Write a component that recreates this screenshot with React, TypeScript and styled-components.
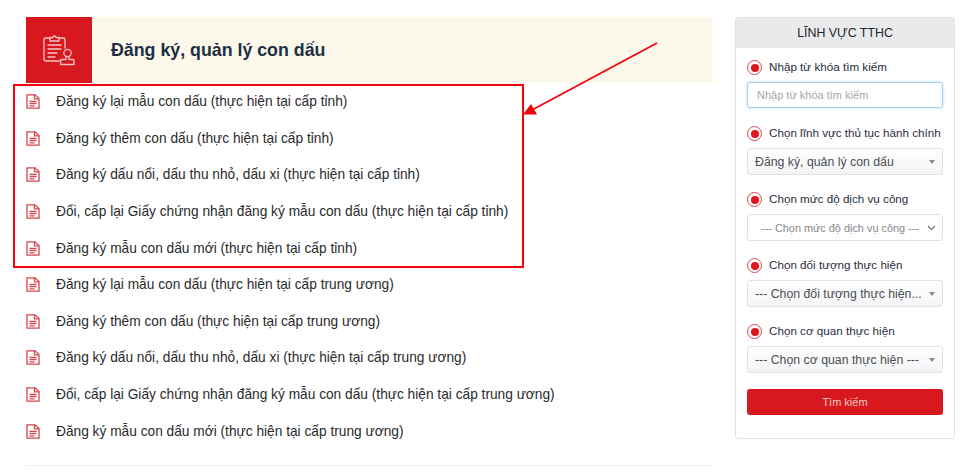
import React from "react";
import styled, { createGlobalStyle } from "styled-components";

const GlobalStyle = createGlobalStyle`
  html, body {
    margin: 0;
    padding: 0;
    background: #fff;
    font-family: "Liberation Sans", Arial, sans-serif;
  }
`;

const Page = styled.div`
  position: relative;
  width: 975px;
  height: 476px;
  overflow: hidden;
  box-sizing: border-box;
  padding: 17px 20px 0 26px;
  display: flex;
  align-items: flex-start;
  gap: 23px;
`;

const Main = styled.main`
  width: 686px;
  flex: none;
`;

const Banner = styled.div`
  display: flex;
  align-items: center;
  height: 66px;
  background: #fcf8ea;
`;

const BannerIcon = styled.div`
  width: 66px;
  height: 66px;
  flex: none;
  background: #d7181f;
  display: flex;
  align-items: center;
  justify-content: center;
`;

const BannerTitle = styled.h1`
  margin: 0 0 0 19px;
  font-size: 17.8px;
  font-weight: 700;
  color: #1d2f45;
`;

const ProcedureList = styled.ul`
  list-style: none;
  margin: 0;
  padding: 0.5px 0 15.5px;
  border-bottom: 1px solid #eceded;
`;

const ProcedureRow = styled.li`
  display: flex;
  align-items: center;
  height: 36.6px;
  font-size: 13.72px;
  color: #2a2a2c;
  white-space: nowrap;
`;

const DocIcon = styled.svg`
  width: 14px;
  height: 15px;
  margin-right: 16px;
  flex: none;
`;

const Sidebar = styled.aside`
  width: 220px;
  height: 422px;
  flex: none;
  box-sizing: border-box;
  border: 1px solid #e3e4e6;
  border-radius: 3px;
  overflow: hidden;
`;

const SidebarTitle = styled.div`
  height: 30px;
  background: #e9eaec;
  display: flex;
  align-items: center;
  justify-content: center;
  font-size: 12.4px;
  color: #24262b;
`;

const SidebarBody = styled.div`
  padding: 11px 11px 0;
  display: flex;
  flex-direction: column;
`;

const Field = styled.div`
  height: 66px;
`;

const FieldLabel = styled.div`
  display: flex;
  align-items: center;
  height: 17px;
  margin-bottom: 6px;
  font-size: 11.66px;
  color: #1f2d3d;
  white-space: nowrap;
`;

const LabelText = styled.span`
  margin-bottom: 2px;
`;

const RadioMark = styled.span`
  width: 15px;
  height: 15px;
  box-sizing: border-box;
  border: 1px solid #d7484e;
  border-radius: 50%;
  margin-right: 7px;
  flex: none;
  display: flex;
  align-items: center;
  justify-content: center;

  &::after {
    content: "";
    width: 8px;
    height: 8px;
    border-radius: 50%;
    background: #e0141c;
  }
`;

const TextInput = styled.input`
  display: block;
  width: 196px;
  height: 26px;
  margin-top: 1px;
  box-sizing: border-box;
  padding: 0 9px;
  border: 1px solid #a9cfe8;
  border-radius: 3px;
  outline: none;
  box-shadow: 0 0 3px rgba(102, 175, 233, 0.45);
  font-family: inherit;
  font-size: 11px;

  &::placeholder {
    color: #a3a7ac;
    opacity: 1;
  }
`;

const SelectBox = styled.div<{ $native?: boolean }>`
  display: flex;
  align-items: center;
  justify-content: space-between;
  width: 196px;
  height: 27px;
  box-sizing: border-box;
  padding: ${({ $native }) => ($native ? "0 6px 0 13px" : "0 7px")};
  border: 1px solid #dfe1e4;
  border-radius: 3px;
  background: ${({ $native }) => ($native ? "#fff" : "linear-gradient(#fff, #f3f4f6)")};
  color: ${({ $native }) => ($native ? "#85888c" : "#4b4e53")};
  font-size: ${({ $native }) => ($native ? "10.9px" : "12.3px")};
  white-space: nowrap;
`;

const Caret = styled.span`
  flex: none;
  width: 0;
  height: 0;
  border-left: 3px solid transparent;
  border-right: 3px solid transparent;
  border-top: 4px solid #85888c;
`;

const Chevron = styled.svg`
  flex: none;
  width: 9px;
  height: 6px;
`;

const SearchButton = styled.button`
  display: block;
  width: 196px;
  height: 26px;
  border: 0;
  border-radius: 3px;
  background: #d7181f;
  color: #f3c6c8;
  font-family: inherit;
  font-size: 11px;
`;

const MarkerBox = styled.div`
  position: absolute;
  left: 13px;
  top: 84px;
  width: 511px;
  height: 184px;
  box-sizing: border-box;
  border: 2px solid #f5000c;
`;

const Arrow = styled.svg`
  position: absolute;
  left: 515px;
  top: 35px;
  width: 150px;
  height: 85px;
`;

const procedures = [
  "Đăng ký lại mẫu con dấu (thực hiện tại cấp tỉnh)",
  "Đăng ký thêm con dấu (thực hiện tại cấp tỉnh)",
  "Đăng ký dấu nổi, dấu thu nhỏ, dấu xi (thực hiện tại cấp tỉnh)",
  "Đổi, cấp lại Giấy chứng nhận đăng ký mẫu con dấu (thực hiện tại cấp tỉnh)",
  "Đăng ký mẫu con dấu mới (thực hiện tại cấp tỉnh)",
  "Đăng ký lại mẫu con dấu (thực hiện tại cấp trung ương)",
  "Đăng ký thêm con dấu (thực hiện tại cấp trung ương)",
  "Đăng ký dấu nổi, dấu thu nhỏ, dấu xi (thực hiện tại cấp trung ương)",
  "Đổi, cấp lại Giấy chứng nhận đăng ký mẫu con dấu (thực hiện tại cấp trung ương)",
  "Đăng ký mẫu con dấu mới (thực hiện tại cấp trung ương)",
];

const filters = [
  { label: "Chọn lĩnh vực thủ tục hành chính", value: "Đăng ký, quản lý con dấu", native: false },
  { label: "Chọn mức độ dịch vụ công", value: "--- Chọn mức độ dịch vụ công ---", native: true },
  { label: "Chọn đối tượng thực hiện", value: "--- Chọn đối tượng thực hiện...", native: false },
  { label: "Chọn cơ quan thực hiện", value: "--- Chọn cơ quan thực hiện ---", native: false },
];

const ClipboardStamp = () => (
  <svg width="32" height="32" viewBox="0 0 32 32" fill="none" stroke="#f6c4c6" strokeWidth="1.3" strokeLinecap="round" strokeLinejoin="round">
    <path d="M7 4H2.500A1.500 1.500 0 0 0 1 5.500v20A1.500 1.500 0 0 0 2.500 27H16" />
    <path d="M16 4h4.500A1.500 1.500 0 0 1 22 5.500V14" />
    <path d="M7 7V3.500h3a1.500 1.500 0 0 1 3 0h3V7H7z" />
    <path d="M5 11h13M5 15h13M5 19h9M5 23h7" />
    <circle cx="24.500" cy="19" r="3.700" />
    <path d="M23 22.500V25.500H18.500a1 1 0 0 0-1 1V30.500H31V26.500a1 1 0 0 0-1-1h-4V22.500" />
  </svg>
);

const FileIcon = () => (
  <DocIcon viewBox="0 0 14 15" fill="none" stroke="#d2474d" strokeWidth="1.300">
    <path d="M1 .8h8l4 3.700v9.700H1z" />
    <path d="M8.500 .8v4h4.500" />
    <path d="M3.500 7.500h7M3.500 9.700h7M3.500 11.900h5" />
  </DocIcon>
);

const DownChevron = () => (
  <Chevron viewBox="0 0 9 6" fill="none" stroke="#6d7074" strokeWidth="1.200">
    <path d="M1 1l3.500 3.500L8 1" />
  </Chevron>
);

const App = () => {
  return (
    <Page>
      <GlobalStyle />
      <Main>
        <Banner>
          <BannerIcon>
            <ClipboardStamp />
          </BannerIcon>
          <BannerTitle>Đăng ký, quản lý con dấu</BannerTitle>
        </Banner>
        <ProcedureList>
          {procedures.map((name, index) => (
            <ProcedureRow key={`${name}_${index}`}>
              <FileIcon />
              {name}
            </ProcedureRow>
          ))}
        </ProcedureList>
      </Main>

      <Sidebar>
        <SidebarTitle>LĨNH VỰC TTHC</SidebarTitle>
        <SidebarBody>
          <Field>
            <FieldLabel>
              <RadioMark />
              <LabelText>Nhập từ khóa tìm kiếm</LabelText>
            </FieldLabel>
            <TextInput placeholder="Nhập từ khóa tìm kiếm" readOnly />
          </Field>
          {filters.map(({ label, value, native }) => (
            <Field key={label}>
              <FieldLabel>
                <RadioMark />
                <LabelText>{label}</LabelText>
              </FieldLabel>
              <SelectBox $native={native}>
                <span>{value}</span>
                {native ? <DownChevron /> : <Caret />}
              </SelectBox>
            </Field>
          ))}
          <SearchButton>Tìm kiếm</SearchButton>
        </SidebarBody>
      </Sidebar>

      <MarkerBox />
      <Arrow viewBox="0 0 150 85" fill="none">
        <path d="M142 8L17 75" stroke="#f5000c" strokeWidth="1.700" />
        <path d="M8 79.500L16 69L22 79.500z" fill="#f5000c" />
      </Arrow>
    </Page>
  );
};

export default App;
